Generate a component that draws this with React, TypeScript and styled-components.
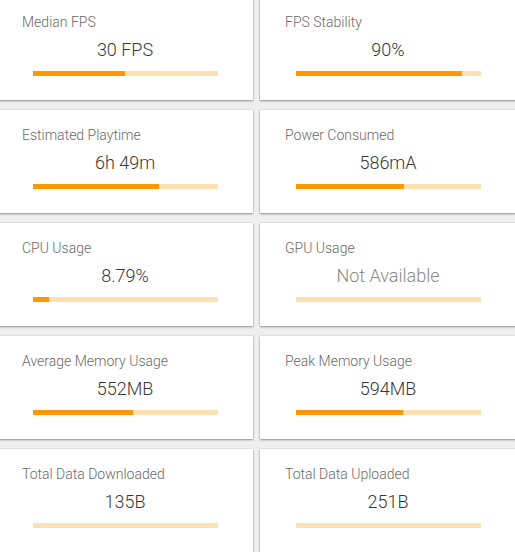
import React from 'react';
import styled, { createGlobalStyle } from 'styled-components';

const GlobalStyle = createGlobalStyle`
  html, body {
    margin: 0;
    padding: 0;
    background: #efefef;
    font-family: Roboto, "Liberation Sans", Arial, sans-serif;
    overflow: hidden;
  }
`;

type Metric = {
  label: string;
  value: string;
  fill: number;
  muted?: boolean;
};

const metrics: Metric[] = [
  { label: 'Median FPS', value: '30 FPS', fill: 50 },
  { label: 'FPS Stability', value: '90%', fill: 90 },
  { label: 'Estimated Playtime', value: '6h 49m', fill: 68.5 },
  { label: 'Power Consumed', value: '586mA', fill: 58.5 },
  { label: 'CPU Usage', value: '8.79%', fill: 8.79 },
  { label: 'GPU Usage', value: 'Not Available', fill: 0, muted: true },
  { label: 'Average Memory Usage', value: '552MB', fill: 54.5 },
  { label: 'Peak Memory Usage', value: '594MB', fill: 58 },
  { label: 'Total Data Downloaded', value: '135B', fill: 0 },
  { label: 'Total Data Uploaded', value: '251B', fill: 0 },
];

export default function App() {
  return (
    <>
      <GlobalStyle />
      <Grid>
        {metrics.map((m) => (
          <Card key={m.label}>
            <Label>{m.label}</Label>
            <Value muted={m.muted}>{m.value}</Value>
            <Track>
              <Fill style={{ width: `${m.fill}%` }} />
            </Track>
          </Card>
        ))}
      </Grid>
    </>
  );
}

const Grid = styled.div`
  display: grid;
  grid-template-columns: 256px 256px;
  column-gap: 7px;
  row-gap: 10px;
  margin: -3px 0 0 -3px;
`;

const Card = styled.div`
  background: #fff;
  height: 103px;
  box-sizing: border-box;
  padding: 17px 25px 0 25px;
  display: flex;
  flex-direction: column;
  box-shadow: 0 1px 2px rgba(0, 0, 0, 0.38), 0 0 1px rgba(0, 0, 0, 0.25);
`;

const Label = styled.div`
  font-size: 14px;
  line-height: 16px;
  font-weight: 300;
  color: #6a6a6a;
  white-space: nowrap;
`;

const Value = styled.div<{ muted?: boolean }>`
  margin-top: 9px;
  font-size: 18px;
  line-height: 22px;
  font-weight: 300;
  text-align: center;
  color: ${(p) => (p.muted ? '#8a8a8a' : '#383838')};
`;

const Track = styled.div`
  margin: 10px auto 0;
  width: 185px;
  height: 5px;
  background: #ffe0b2;
  display: flex;
`;

const Fill = styled.div`
  height: 100%;
  background: #ff9800;
`;
